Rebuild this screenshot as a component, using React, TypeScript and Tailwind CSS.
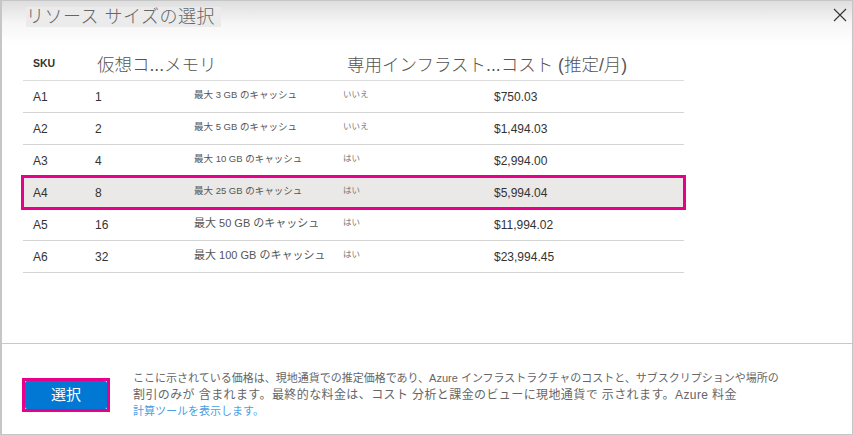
import React from "react";

const rows = [
  { sku: "A1", cores: "1", mem: "最大 3 GB のキャッシュ", big: false, ded: "いいえ", cost: "$750.03" },
  { sku: "A2", cores: "2", mem: "最大 5 GB のキャッシュ", big: false, ded: "いいえ", cost: "$1,494.03" },
  { sku: "A3", cores: "4", mem: "最大 10 GB のキャッシュ", big: false, ded: "はい", cost: "$2,994.00" },
  { sku: "A4", cores: "8", mem: "最大 25 GB のキャッシュ", big: false, ded: "はい", cost: "$5,994.04", sel: true },
  { sku: "A5", cores: "16", mem: "最大 50 GB のキャッシュ", big: true, ded: "はい", cost: "$11,994.02" },
  { sku: "A6", cores: "32", mem: "最大 100 GB のキャッシュ", big: true, ded: "はい", cost: "$23,994.45" },
];

const font = "font-['Liberation_Sans','Noto_Sans_CJK_JP',sans-serif]";

export default function App() {
  return (
    <div className={`w-[853px] h-[435px] ${font} bg-white`}>
      <div className="w-full h-full border border-[#c6c6c6] border-l-2 flex flex-col">
        <div className="h-[44px] bg-gradient-to-b from-[#dedede] via-[#f6f6f6] to-white flex justify-between shrink-0">
          <div className="pl-[24px] pt-[5px]">
            <span className="inline-block bg-[#ebebeb] text-[18px] leading-[20px] text-[#666] font-light tracking-[0.5px] pr-[6px]">
              リソース サイズの選択
            </span>
          </div>
          <div className="pr-[4px] pt-[7px]">
            <svg width="14" height="14" viewBox="0 0 14 14" className="mr-[1px]">
              <path d="M1 1 L13 13 M13 1 L1 13" stroke="#333" strokeWidth="1.1" />
            </svg>
          </div>
        </div>

        <div className="pl-[21px] w-[682px] shrink-0 mt-[7px]">
          <div className="grid grid-cols-[72px_99px_149px_151px_1fr] h-[29px] items-center border-b border-[#dcdcdc]">
            <div className="pl-[10px] text-[10.5px] font-bold text-[#333] mt-[-4px]">SKU</div>
            <div className="pl-[2px] text-[17.5px] leading-[22px] text-[#555] font-light col-span-2 whitespace-nowrap mt-[-2px]">
              仮想コ...メモリ
            </div>
            <div className="pl-[4px] text-[17.5px] leading-[22px] text-[#555] font-light col-span-2 whitespace-nowrap mt-[-2px]">
              専用インフラスト...コスト (推定/月)
            </div>
          </div>
          {rows.map((r) => (
            <div
              key={r.sku}
              className={`relative grid grid-cols-[72px_99px_149px_151px_1fr] h-[32px] items-center border-b border-[#d4d4d4] ${
                r.sel ? "bg-[#ebe9e7]" : ""
              }`}
            >
              <div className="pl-[10px] text-[12px] text-[#333]">{r.sku}</div>
              <div className="text-[12px] text-[#333]">{r.cores}</div>
              <div className={`${r.big ? "text-[11px]" : "text-[9.5px]"} text-[#555] whitespace-nowrap -mt-[2px]`}>{r.mem}</div>
              <div className="text-[8.5px] text-[#777] -mt-[4px]">{r.ded}</div>
              <div className="text-[12px] text-[#333]">{r.cost}</div>
              {r.sel && (
                <div className="absolute left-[-2px] right-[-2px] top-[-2px] bottom-[-2px] border-[3px] border-[#e6008a] pointer-events-none" />
              )}
            </div>
          ))}
        </div>

        <div className="flex-1" />

        <div className="h-[91px] border-t border-[#c8c8c8] flex items-center pt-[12px] shrink-0">
          <div className="ml-[20px] border-[3px] border-[#e6008a] p-0">
            <button className="w-[82px] h-[28px] bg-[#0078d4] text-white text-[15px] rounded-[2px] flex items-center justify-center">
              選択
            </button>
          </div>
          <div className="ml-[23px] text-[11px] leading-[16.5px] text-[#666] whitespace-nowrap">
            ここに示されている価格は、現地通貨での推定価格であり、Azure インフラストラクチャのコストと、サブスクリプションや場所の
            <br />
            <span className="text-[12px] tracking-[0.4px]">
              割引のみが 含まれます。最終的な料金は、コスト 分析と課金のビューに現地通貨で 示されます。Azure 料金
            </span>
            <br />
            <span className="text-[#4a9fe2]">計算ツールを表示します。</span>
          </div>
        </div>
      </div>
    </div>
  );
}
